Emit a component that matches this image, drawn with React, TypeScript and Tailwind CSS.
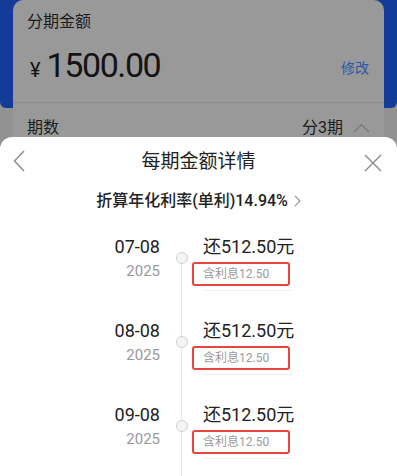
import React from "react";

const rows = [
  { date: "07-08", year: "2025", amount: "还512.50元", interest: "含利息12.50" },
  { date: "08-08", year: "2025", amount: "还512.50元", interest: "含利息12.50" },
  { date: "09-08", year: "2025", amount: "还512.50元", interest: "含利息12.50" },
];

export default function App() {
  return (
    <div className="relative h-[476px] w-[397px] overflow-hidden bg-[#929292] font-['Roboto','Noto_Sans_CJK_SC',sans-serif]">
      {/* blue header behind card */}
      <div className="h-[108px] rounded-b-[6px] bg-[#123c98]" />
      {/* card under overlay */}
      <div className="relative mx-[13px] -mt-[108px] h-[200px] rounded-t-[10px] bg-[#999999]">
        <div className="px-[14px] pt-[10px]">
          <div className="text-[16px] leading-[24px] text-[#1c1c1c]">分期金额</div>
          <div className="mt-[11px] flex items-center justify-between">
            <div className="flex items-baseline text-[#141414]">
              <span className="ml-[3px] text-[20px]">¥</span>
              <span className="ml-[6px] text-[34px] leading-[40px] tracking-[-1.4px]">1500.00</span>
            </div>
            <span className="mr-[1px] mt-[6px] text-[14px] leading-[20px] text-[#2d57a8]">修改</span>
          </div>
        </div>
        <div className="mt-[17px] h-px bg-[#8c8c8c]" />
        <div className="flex items-center justify-between px-[14px] pt-[13px]">
          <span className="text-[16px] leading-[24px] text-[#1c1c1c]">期数</span>
          <div className="flex items-center gap-[10px]">
            <span className="text-[16px] leading-[24px] text-[#1c1c1c]">分3期</span>
            <svg width="17" height="10" viewBox="0 0 17 10">
              <path d="M1 9 L8.5 1.5 L16 9" fill="none" stroke="#777" strokeWidth="1.2" />
            </svg>
          </div>
        </div>
      </div>

      {/* bottom sheet */}
      <div className="absolute inset-x-0 top-[137px] bottom-0 rounded-t-[12px] bg-white">
        <div className="relative flex h-[50px] items-center justify-center">
          <svg width="12" height="22" viewBox="0 0 12 22" className="absolute left-[13px] top-[13px]">
            <path d="M11 1 L1.5 11 L11 21" fill="none" stroke="#8a8a8a" strokeWidth="1.4" />
          </svg>
          <span className="text-[19px] leading-[26px] text-[#222]">每期金额详情</span>
          <svg width="18" height="18" viewBox="0 0 18 18" className="absolute right-[15px] top-[17px]">
            <path d="M1 1 L17 17 M17 1 L1 17" fill="none" stroke="#8a8a8a" strokeWidth="1.4" />
          </svg>
        </div>
        <div className="mt-[2px] flex items-center justify-center gap-[6px]">
          <span className="text-[16px] font-medium leading-[24px] text-[#222]">折算年化利率(单利)14.94%</span>
          <svg width="7" height="12" viewBox="0 0 7 12">
            <path d="M1 1 L6 6 L1 11" fill="none" stroke="#999" strokeWidth="1.1" />
          </svg>
        </div>

        <div className="mt-[22px]">
          {rows.map((r, i) => (
            <div key={i} className="flex h-[84px]">
              <div className="flex w-[160px] flex-col items-end">
                <span className="text-[18px] leading-[24px] text-[#222]">{r.date}</span>
                <span className="mt-[2px] text-[15px] leading-[20px] text-[#999]">{r.year}</span>
              </div>
              <div className="relative w-[43px]">
                <div className={`absolute left-[21px] w-px bg-[#e2e2e2] ${i === 0 ? "top-[23px]" : "top-0"} bottom-0`} />
                <div className="absolute left-[16px] top-[17px] h-[12px] w-[12px] rounded-full border border-[#cfcfcf] bg-[#f4f4f4]" />
              </div>
              <div className="flex w-[90px] flex-col">
                <span className="whitespace-nowrap text-[18px] leading-[24px] text-[#222]">{r.amount}</span>
                <div className="-ml-[11px] mt-[3px] flex h-[24px] w-[98px] items-center rounded-[3px] border-2 border-[#e8453c] pl-[9px]">
                  <span className="whitespace-nowrap text-[12px] text-[#9a9a9a]">{r.interest}</span>
                </div>
                <div className="mt-[4px] h-px bg-[#f0f0f0]" />
              </div>
            </div>
          ))}
        </div>
      </div>
    </div>
  );
}
